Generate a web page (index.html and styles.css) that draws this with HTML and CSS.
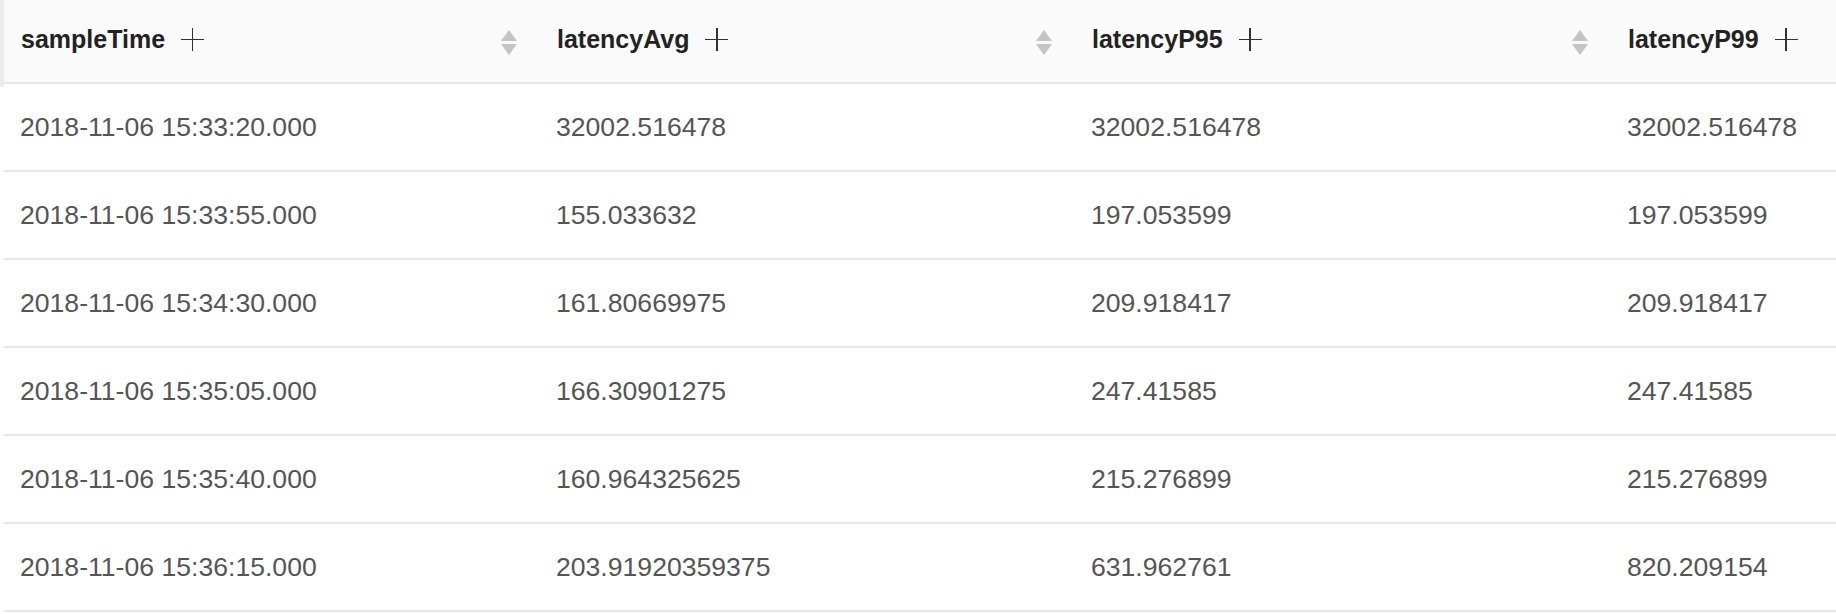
FILE: index.html
```html
<!DOCTYPE html>
<html>
<head>
<meta charset="utf-8">
<link rel="stylesheet" href="styles.css">
</head>
<body>
<div class="wrap">
  <div class="edge"></div>
  <div class="scroller">
  <table class="grid">
    <colgroup>
      <col class="c1"><col class="c2"><col class="c3"><col class="c4">
    </colgroup>
    <thead>
      <tr>
        <th><div class="hcell"><span class="title">sampleTime</span><span class="plus"></span><span class="sort"><i class="up"></i><i class="down"></i></span></div></th>
        <th><div class="hcell"><span class="title">latencyAvg</span><span class="plus"></span><span class="sort"><i class="up"></i><i class="down"></i></span></div></th>
        <th><div class="hcell"><span class="title">latencyP95</span><span class="plus"></span><span class="sort"><i class="up"></i><i class="down"></i></span></div></th>
        <th><div class="hcell"><span class="title">latencyP99</span><span class="plus"></span><span class="sort"><i class="up"></i><i class="down"></i></span></div></th>
      </tr>
    </thead>
    <tbody>
      <tr><td>2018-11-06 15:33:20.000</td><td>32002.516478</td><td>32002.516478</td><td>32002.516478</td></tr>
      <tr><td>2018-11-06 15:33:55.000</td><td>155.033632</td><td>197.053599</td><td>197.053599</td></tr>
      <tr><td>2018-11-06 15:34:30.000</td><td>161.80669975</td><td>209.918417</td><td>209.918417</td></tr>
      <tr><td>2018-11-06 15:35:05.000</td><td>166.30901275</td><td>247.41585</td><td>247.41585</td></tr>
      <tr><td>2018-11-06 15:35:40.000</td><td>160.964325625</td><td>215.276899</td><td>215.276899</td></tr>
      <tr><td>2018-11-06 15:36:15.000</td><td>203.91920359375</td><td>631.962761</td><td>820.209154</td></tr>
    </tbody>
  </table>
  </div>
</div>
</body>
</html>
```

FILE: styles.css
```css
html, body {
  margin: 0;
  padding: 0;
  background: #fff;
  overflow: hidden;
}
body {
  width: 1836px;
  height: 614px;
  font-family: "Liberation Sans", Arial, Helvetica, sans-serif;
}
.wrap {
  display: flex;
  align-items: flex-start;
  width: 1836px;
  overflow: hidden;
}
.edge {
  flex: 0 0 4px;
  width: 4px;
  height: 87px;
  background: #ececec;
}
.scroller {
  flex: 1 1 auto;
  min-width: 0;
  overflow: hidden;
}
.grid {
  border-collapse: collapse;
  table-layout: fixed;
  width: 2143px;
}
.c1 { width: 536px; }
.c2 { width: 535px; }
.c3 { width: 536px; }
.c4 { width: 536px; }
th {
  height: 82px;
  padding: 0 23px 0 17px;
  background: #fafafa;
  border-bottom: 2px solid #e8e8e8;
  text-align: left;
  vertical-align: middle;
}
.hcell {
  display: flex;
  align-items: center;
}
.title {
  font-size: 25px;
  font-weight: bold;
  color: #222;
  margin-bottom: 3px;
}
.plus {
  position: relative;
  width: 23px;
  height: 23px;
  margin-left: 16px;
  margin-bottom: 3px;
}
.plus::before, .plus::after {
  content: "";
  position: absolute;
  background: #333;
}
.plus::before {
  left: 0;
  right: 0;
  top: 10.5px;
  height: 1.6px;
}
.plus::after {
  top: 0;
  bottom: 0;
  left: 10.5px;
  width: 1.6px;
}
.sort {
  margin-left: auto;
  display: flex;
  flex-direction: column;
  align-items: center;
  gap: 3px;
  margin-top: 2px;
}
.sort i {
  display: block;
  width: 0;
  height: 0;
  border-left: 8px solid transparent;
  border-right: 8px solid transparent;
}
.sort .up {
  border-bottom: 11px solid #c4c4c4;
}
.sort .down {
  border-top: 11px solid #c4c4c4;
}
td {
  height: 86px;
  padding: 0 17px 0 16px;
  border-bottom: 2px solid #e8e8e8;
  font-size: 26.6px;
  color: #555;
  vertical-align: middle;
  white-space: nowrap;
}
```
